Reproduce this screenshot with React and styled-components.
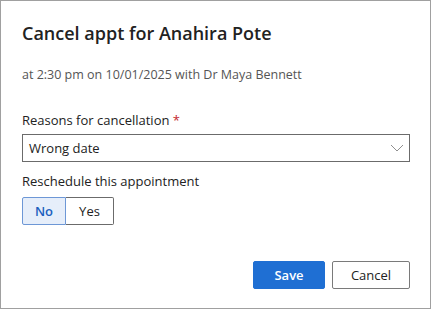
import React from 'react';
import styled, { createGlobalStyle } from 'styled-components';

const GlobalStyle = createGlobalStyle`
  html, body { margin: 0; padding: 0; background: #ffffff; }
  * { box-sizing: border-box; }
`;

// --- Styled Components ---

const Dialog = styled.div`
  width: 431px;
  height: 309px;
  border: 1px solid #a0a0a0;
  background: #ffffff;
  padding: 20px 20px 19px 21px;
  font-family: 'Open Sans', 'Noto Sans', sans-serif;
  color: #222222;
  display: flex;
  flex-direction: column;
`;

const Title = styled.h2`
  margin: 0;
  font-size: 18px;
  line-height: 24px;
  font-weight: 600;
  color: #222222;
`;

const Subtitle = styled.p`
  margin: 22px 0 0;
  font-size: 12.5px;
  line-height: 16px;
  color: #555555;
`;

const Label = styled.label`
  display: block;
  margin-top: ${({ mt }) => mt}px;
  font-size: 13px;
  line-height: 18px;
  color: #222222;
`;

const Required = styled.span`
  color: #c4262e;
`;

const Select = styled.div`
  margin-top: 5px;
  height: 28px;
  border: 1px solid #6b6b6b;
  display: flex;
  align-items: center;
  justify-content: space-between;
  padding: 0 5px 0 6px;
  font-size: 13px;
  color: #222222;
`;

const Toggle = styled.div`
  margin-top: 7px;
  display: flex;
  align-self: flex-start;
  height: 28px;
`;

const ToggleButton = styled.button`
  height: 28px;
  width: ${({ w }) => w}px;
  padding: 0;
  font-family: inherit;
  font-size: 13px;
  font-weight: ${({ active }) => (active ? 600 : 400)};
  color: ${({ active }) => (active ? '#1b5fbf' : '#222222')};
  background: ${({ active }) => (active ? '#e6eefa' : '#ffffff')};
  border: 1px solid ${({ active }) => (active ? '#6d97d6' : '#6b6b6b')};
  border-left-width: ${({ active }) => (active ? 1 : 0)}px;
  border-radius: ${({ first }) => (first ? '2px 0 0 2px' : '0 2px 2px 0')};
`;

const Footer = styled.div`
  margin-top: auto;
  display: flex;
  justify-content: flex-end;
  gap: 7px;
`;

const Button = styled.button`
  height: 28px;
  width: ${({ w }) => w}px;
  padding: 0;
  font-family: inherit;
  font-size: 13px;
  font-weight: ${({ primary }) => (primary ? 600 : 400)};
  color: ${({ primary }) => (primary ? '#ffffff' : '#222222')};
  background: ${({ primary }) => (primary ? '#1f6fd3' : '#ffffff')};
  border: 1px solid ${({ primary }) => (primary ? '#1f6fd3' : '#7a7a7a')};
  border-radius: 2px;
`;

const Chevron = () => (
  <svg width="14" height="8" viewBox="0 0 14 8" fill="none">
    <path d="M1 1 L7 7 L13 1" stroke="#8f8f8f" strokeWidth="1" />
  </svg>
);

// --- Component ---

const App = () => (
  <>
    <GlobalStyle />
    <Dialog>
      <Title>Cancel appt for Anahira Pote</Title>
      <Subtitle>at 2:30 pm on 10/01/2025 with Dr Maya Bennett</Subtitle>

      <Label mt={28}>
        Reasons for cancellation <Required>*</Required>
      </Label>
      <Select>
        <span>Wrong date</span>
        <Chevron />
      </Select>

      <Label mt={10}>Reschedule this appointment</Label>
      <Toggle>
        <ToggleButton first active w={44}>No</ToggleButton>
        <ToggleButton w={48}>Yes</ToggleButton>
      </Toggle>

      <Footer>
        <Button primary w={72}>Save</Button>
        <Button w={78}>Cancel</Button>
      </Footer>
    </Dialog>
  </>
);

export default App;
